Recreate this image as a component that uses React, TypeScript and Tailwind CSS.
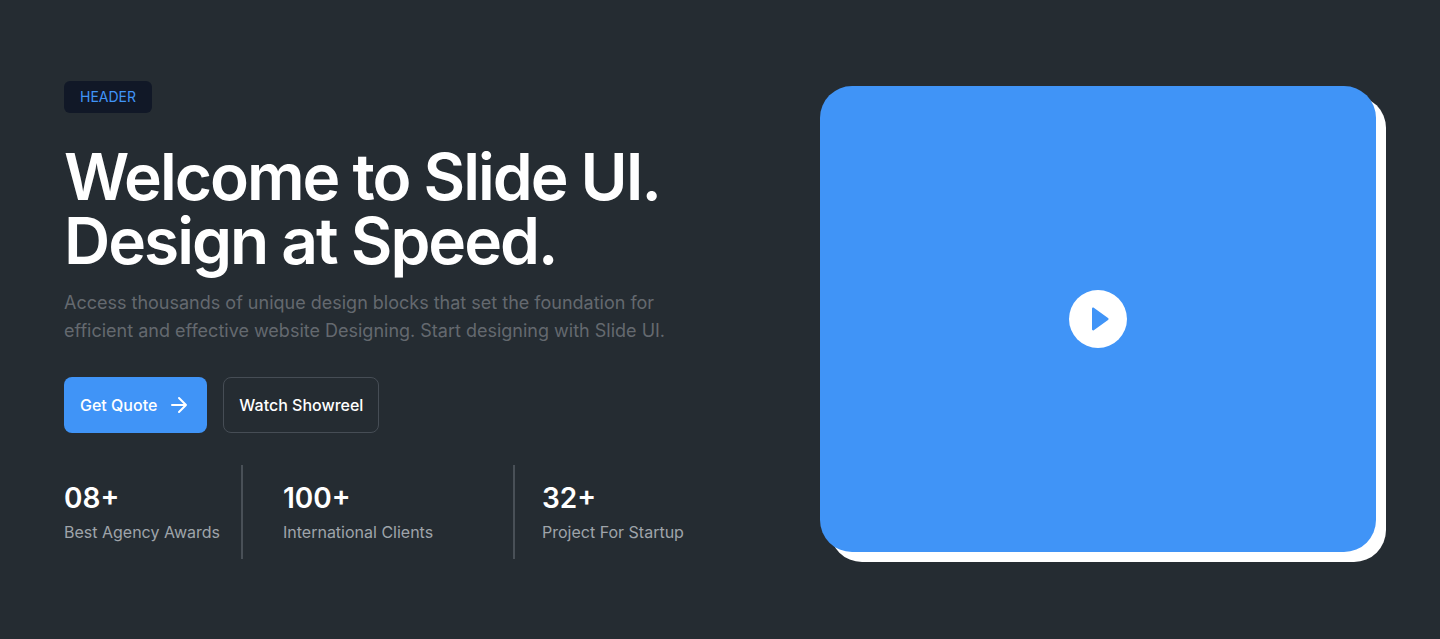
const stats = [
  { value: "08+", label: "Best Agency Awards", cell: "w-[179px] border-r-2 pr-5" },
  { value: "100+", label: "International Clients", cell: "w-[272px] border-r-2 pl-10" },
  { value: "32+", label: "Project For Startup", cell: "pl-[27px]" },
];

export default function App() {
  return (
    <main className="flex min-h-screen items-center justify-between gap-12 bg-[#252c32] px-16 pb-px font-['Inter',sans-serif]">
      <section className="flex flex-col items-start pt-px">
        <span className="rounded-md bg-[#111827] px-4 py-1.5 text-sm leading-5 text-[#4094f7]">HEADER</span>
        <h1 className="mt-8 text-[64px] leading-[64px] font-semibold tracking-[-2px] whitespace-nowrap text-white">
          Welcome to Slide UI.
          <br />
          Design at Speed.
        </h1>
        <p className="mt-4 text-lg leading-7 whitespace-nowrap text-[#64696f]">
          Access thousands of unique design blocks that set the foundation for
          <br />
          efficient and effective website Designing. Start designing with Slide UI.
        </p>
        <div className="mt-8 flex gap-4">
          <button type="button" className="flex h-14 items-center gap-2.5 rounded-lg bg-[#4094f7] px-4 text-base font-medium text-white">
            Get Quote
            <svg className="size-6" viewBox="0 0 24 24" fill="none" stroke="currentColor" strokeWidth="2" strokeLinecap="round" strokeLinejoin="round" aria-hidden="true">
              <path d="M5 12h14M12 5l7 7-7 7" />
            </svg>
          </button>
          <button type="button" className="h-14 rounded-lg border border-[#464d55] px-[15px] text-base font-medium text-white">
            Watch Showreel
          </button>
        </div>
        <dl className="mt-8 flex whitespace-nowrap">
          {stats.map((s) => (
            <div key={s.label} className={`flex h-[94px] flex-col-reverse justify-center gap-1 border-[#495057] ${s.cell}`}>
              <dt className="text-base leading-6 text-[#9fa4aa]">{s.label}</dt>
              <dd className="text-[28px] leading-9 font-semibold text-white">{s.value}</dd>
            </div>
          ))}
        </dl>
      </section>
      <section className="flex h-[466px] w-[556px] items-center justify-center rounded-[32px] bg-[#4094f7] shadow-[10px_10px_0_0_#ffffff]">
        <button type="button" aria-label="Play showreel" className="flex size-[58px] items-center justify-center rounded-full bg-white text-[#4094f7]">
          <svg className="size-6" viewBox="0 0 24 24" fill="currentColor" aria-hidden="true">
            <path d="M6 1.800v20.400c0 1 1 1.500 1.800 1L22 13c.8-.5.8-1.500 0-2L7.800.8C7 .3 6 .8 6 1.800Z" />
          </svg>
        </button>
      </section>
    </main>
  );
}
